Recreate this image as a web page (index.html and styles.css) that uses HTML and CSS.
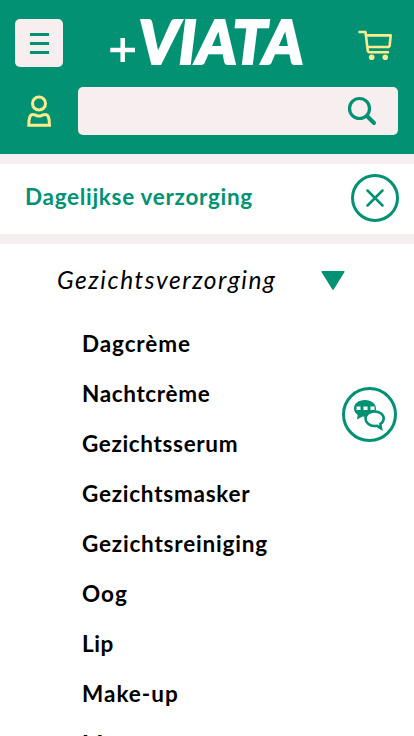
FILE: index.html
```html
<!DOCTYPE html>
<html lang="nl">
<head>
<meta charset="utf-8">
<meta name="viewport" content="width=device-width, initial-scale=1">
<title>Viata</title>
<link rel="stylesheet" href="styles.css">
</head>
<body>
<header class="header">
  <div class="top-row">
    <button class="menu" aria-label="Menu"><span></span><span></span><span></span></button>
    <a class="logo" aria-label="+VIATA">
      <svg width="196" height="56" viewBox="0 0 196 56">
        <path class="plus" d="M1.300 35h24.700M13.700 23v24"/>
        <text class="wordmark" x="29.500" y="49.300" textLength="165" lengthAdjust="spacingAndGlyphs">VIATA</text>
      </svg>
    </a>
    <svg class="cart" width="36" height="32" viewBox="0 0 36 32" aria-label="Winkelwagen">
      <path d="M2.500 3h6l2.200 18.200q.2 2 2 2H31M9 6.400h24.700l-1 9.600q-.2 2-2 2H11"/>
      <circle cx="14.700" cy="28.300" r="2.800"/><circle cx="28.200" cy="28.300" r="2.800"/>
    </svg>
  </div>
  <div class="search-row">
    <svg class="user" width="26" height="34" viewBox="0 0 26 34" aria-label="Account">
      <circle cx="13" cy="9.500" r="6.500"/>
      <path d="M2.800 31.300h20.700q0-11-4.200-10.800c-3.600 0-3.300 1.500-6.300 1.500s-2.700-1.500-6.300-1.500Q2.800 20.300 2.800 31.300z"/>
    </svg>
    <div class="search">
      <svg width="30" height="30" viewBox="0 0 30 30" aria-label="Zoeken">
        <circle cx="12.500" cy="12.500" r="10"/><path class="handle" d="M20 20l7 7"/>
      </svg>
    </div>
  </div>
</header>
<section class="category">
  <h1 class="category-title">Dagelijkse verzorging</h1>
  <button class="close" aria-label="Sluiten"><svg width="18" height="18" viewBox="0 0 18 18"><path d="M1.500 1.500l15 15M16.500 1.500l-15 15"/></svg></button>
</section>
<main class="content">
  <div class="sub">
    <h2 class="sub-title">Gezichtsverzorging</h2>
    <svg class="arrow" width="24" height="19" viewBox="0 0 24 19"><path d="M1.200.8h21.600L12 18z"/></svg>
  </div>
  <ul class="links">
    <li class="dag">Dagcrème</li>
    <li class="nacht">Nachtcrème</li>
    <li class="serum">Gezichtsserum</li>
    <li class="masker">Gezichtsmasker</li>
    <li class="reiniging">Gezichtsreiniging</li>
    <li class="oog">Oog</li>
    <li class="lip">Lip</li>
    <li class="makeup">Make-up</li>
    <li class="mannen">Mannen</li>
  </ul>
</main>
<button class="chat" aria-label="Chat">
  <svg width="34" height="32" viewBox="0 0 34 32">
    <path class="bubble" d="M12 1C5.500 1 1 4.500 1 9.500c0 2.500 1.300 4.800 3.700 6.400L4 20.500l5.500-3c5 .8 13.500-.3 13.500-7.800C23 4.500 18.500 1 12 1z"/>
    <path class="outline" d="M21.500 12.500c-5 0-9 3-9 7s4 7.500 9 7.500l2.500-.2 4 2.500-.7-4.300c2.200-1.500 3.400-3.300 3.400-5.500 0-4-4-7-9.200-7z"/>
    <path class="dots" d="M3.500 7.500h4v3.400h-4zM10.500 7.500h4v3.400h-4zM17.500 7.500h4v3.400h-4z"/>
  </svg>
</button>
</body>
</html>
```
FILE: styles.css
```css
* { box-sizing: border-box; }
body { margin: 0; height: 736px; overflow: hidden; background: #fff; color: #000; font-family: Lato, "Liberation Sans", sans-serif; }
button { padding: 0; border: 0; }
svg { display: block; flex: none; }
.header { height: 154px; padding: 15px 16px 0 15px; background: #029273; }
.top-row { display: flex; align-items: flex-start; height: 72px; }
.menu { display: flex; flex-direction: column; justify-content: center; align-items: center; gap: 6px; width: 48px; height: 48px; margin-top: 4px; border-radius: 5px; background: #f6eeef; }
.menu span { width: 19px; height: 3px; background: #029273; }
.logo { margin-left: 46px; }
.logo svg { overflow: visible; }
.plus { stroke: #fff; stroke-width: 4.500; }
.wordmark { fill: #fff; stroke: #fff; stroke-width: 2; font-size: 60px; font-weight: 900; font-style: italic; }
.cart { margin: 14px 0 0 52px; fill: none; stroke: #fbeb8e; stroke-width: 2.600; stroke-linecap: round; stroke-linejoin: round; }
.cart circle { fill: #fbeb8e; stroke: none; }
.search-row { display: flex; }
.user { margin: 7px 26px 0 11px; fill: none; stroke: #fbeb8e; stroke-width: 3; }
.search { display: flex; justify-content: flex-end; flex: 1; height: 48px; padding: 9px 21px 0 0; border-radius: 5px; background: #f6eeef; }
.search svg { fill: none; stroke: #029273; stroke-width: 3.200; stroke-linecap: round; }
.search .handle { stroke-width: 4; }
.category { display: flex; justify-content: space-between; align-items: flex-start; height: 90px; padding: 10px 15px 0 25px; border-top: 10px solid #f6eeef; border-bottom: 10px solid #f6eeef; }
.category-title { margin: 8px 0 0; font-size: 22.500px; line-height: 30px; letter-spacing: .7px; white-space: nowrap; color: #029273; }
.close { display: grid; place-items: center; width: 48px; height: 48px; border: 3px solid #029273; border-radius: 50%; background: #fff; }
.close svg { fill: none; stroke: #029273; stroke-width: 2.500; stroke-linecap: round; }
.sub { display: flex; justify-content: space-between; height: 75px; padding: 21px 69px 0 57px; }
.sub-title { margin: 0; font-size: 24.500px; font-style: italic; font-weight: 400; line-height: 30px; letter-spacing: 1.550px; white-space: nowrap; }
.arrow { margin-top: 6px; fill: #029273; stroke: #029273; stroke-width: 1.500; stroke-linejoin: round; }
.links { margin: 0; padding: 0 0 0 82px; list-style: none; font-size: 22.500px; font-weight: 700; line-height: 50px; letter-spacing: .65px; }
.dag { letter-spacing: .9px; }
.masker { letter-spacing: .75px; }
.reiniging { letter-spacing: .8px; }
.oog, .makeup { letter-spacing: 1px; }
.lip { letter-spacing: .5px; }
.chat { position: fixed; left: 342px; top: 387px; display: grid; place-items: center; width: 55px; height: 55px; border: 3px solid #029273; border-radius: 50%; background: #fff; }
.bubble { fill: #029273; }
.outline { fill: #fff; stroke: #029273; stroke-width: 2.600; }
.dots { fill: #fff; }
```
